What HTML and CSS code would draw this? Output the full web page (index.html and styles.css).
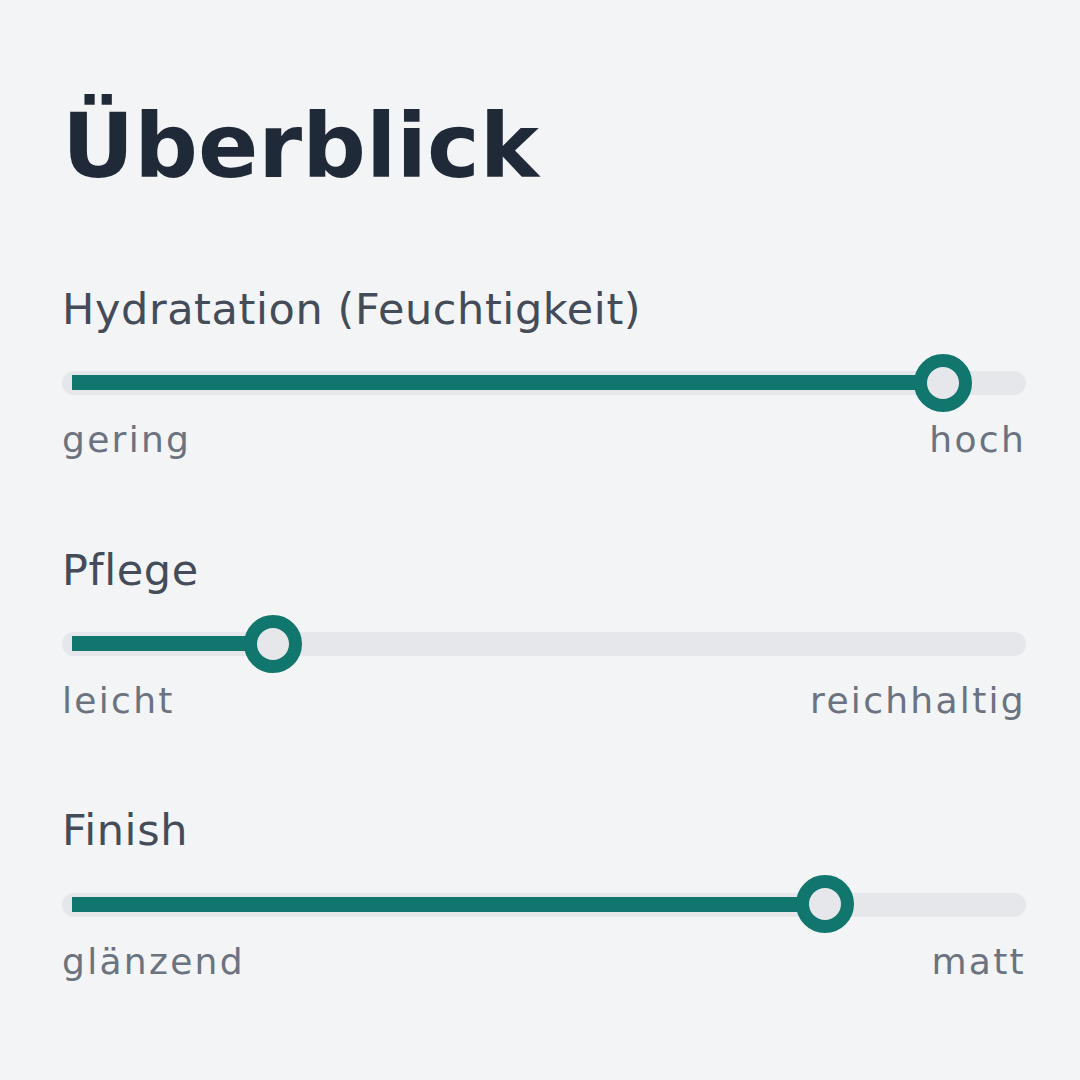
FILE: index.html
```html
<!DOCTYPE html>
<html lang="de">
<head>
<meta charset="utf-8">
<title>Überblick</title>
<link rel="stylesheet" href="styles.css">
</head>
<body>
<main class="page">
  <h1 class="title">Überblick</h1>

  <section class="scale">
    <div class="scale-label">Hydratation (Feuchtigkeit)</div>
    <div class="track">
      <div class="fill" style="width: 871px"><span class="thumb"></span></div>
    </div>
    <div class="ends"><span>gering</span><span>hoch</span></div>
  </section>

  <section class="scale">
    <div class="scale-label">Pflege</div>
    <div class="track">
      <div class="fill" style="width: 201px"><span class="thumb"></span></div>
    </div>
    <div class="ends"><span>leicht</span><span>reichhaltig</span></div>
  </section>

  <section class="scale">
    <div class="scale-label">Finish</div>
    <div class="track">
      <div class="fill" style="width: 753px"><span class="thumb"></span></div>
    </div>
    <div class="ends"><span>glänzend</span><span>matt</span></div>
  </section>
</main>
</body>
</html>
```
FILE: styles.css
```css
html, body {
  margin: 0;
  padding: 0;
  background: #f3f4f6;
}

body {
  font-family: "DejaVu Sans", "Liberation Sans", sans-serif;
}

.page {
  width: 1080px;
  height: 1080px;
  box-sizing: border-box;
  padding: 93px 54px 0 62px;
  display: flex;
  flex-direction: column;
  gap: 83px;
}

.title {
  margin: 0 0 1px;
  font-size: 89px;
  line-height: 1.2;
  font-weight: 700;
  color: #1f2937;
}

.scale {
  display: flex;
  flex-direction: column;
}

.scale-label {
  font-size: 43px;
  line-height: 1.2;
  letter-spacing: 0.6px;
  color: #444b59;
  margin-bottom: 36px;
}

.track {
  height: 24px;
  box-sizing: border-box;
  padding: 4px 0 5px 10px;
  border-radius: 12px;
  background: #e5e7eb;
}

.fill {
  position: relative;
  height: 15px;
  background: #11766d;
}

.thumb {
  position: absolute;
  right: -29px;
  top: 50%;
  width: 58px;
  height: 58px;
  margin-top: -29px;
  box-sizing: border-box;
  border: 13px solid #11766d;
  border-radius: 50%;
  background: #e5e7eb;
}

.ends {
  margin-top: 23px;
  display: flex;
  justify-content: space-between;
  font-size: 36px;
  line-height: 1.2;
  letter-spacing: 2.3px;
  color: #6b7280;
}
```
